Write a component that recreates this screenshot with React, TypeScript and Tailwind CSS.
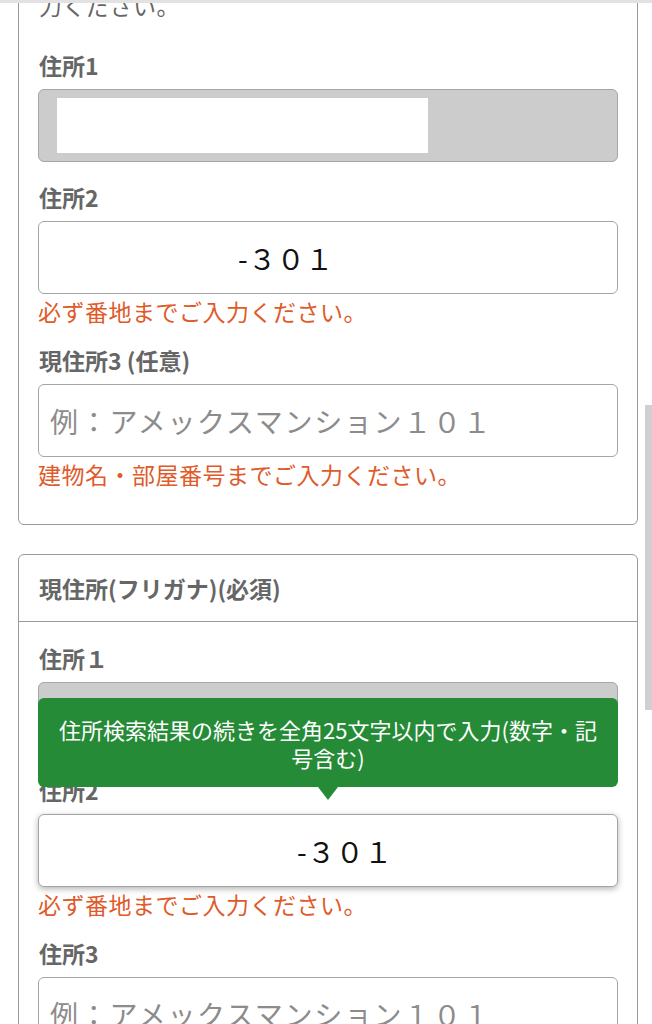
import React from 'react';

const font = { fontFamily: '"Noto Sans CJK JP", "Noto Sans", sans-serif' };

function Label({ children, className = '' }: { children: React.ReactNode; className?: string }) {
  return <div className={`text-[23px] leading-[32px] font-bold text-[#666] ${className}`}>{children}</div>;
}

function ErrorText({ children }: { children: React.ReactNode }) {
  return <div className="mt-[1px] text-[23px] leading-[32px] tracking-[0.5px] text-[#e05a2a]">{children}</div>;
}

function Tooltip() {
  return (
    <div className="absolute left-0 right-0 bottom-[calc(100%+27px)] z-10 h-[89px] rounded-md bg-[#268b37] px-[14px] flex flex-col items-center justify-center text-center text-[22px] leading-[28px] text-white">
      <span className="whitespace-nowrap">住所検索結果の続きを全角25文字以内で入力(数字・記</span>
      <span>号含む)</span>
      <div className="absolute top-full left-1/2 -translate-x-1/2 h-0 w-0 border-x-[10px] border-t-[13px] border-x-transparent border-t-[#268b37]" />
    </div>
  );
}

export default function App() {
  return (
    <div className="relative h-[1024px] w-[652px] overflow-hidden bg-white" style={font}>
      {/* browser chrome shadow */}
      <div className="absolute top-0 left-0 right-0 h-[3px] bg-[#e2e2e2] z-20" />
      {/* scrollbar */}
      <div className="absolute right-0 top-[405px] h-[305px] w-[7px] bg-[#d0d0d0] z-20" />

      <div className="ml-[18px] mr-[14px]">
        {/* 現住所 */}
        <div className="-mt-[60px] rounded-md border border-[#9a9a9a] px-[19px] pt-[48px] pb-[34px]">
          <div className="pl-[1px] text-[23px] leading-[32px] tracking-[0.5px] text-[#666]">力ください。</div>

          <Label className="mt-[28px] pl-[1px]">住所1</Label>
          <div className="mt-2 flex h-[73px] items-center rounded-md border border-[#a5a5a5] bg-[#cccccc] pl-[18px]">
            <div className="h-[55px] w-[371px] bg-white" />
          </div>

          <Label className="mt-[19px] pl-[1px]">住所2</Label>
          <input
            readOnly
            value="-３０１"
            className="mt-2 block h-[73px] w-full rounded-md border border-[#a5a5a5] bg-white pl-[199px] text-[28px] tracking-[0.5px] text-[#111] outline-none"
          />
          <ErrorText>必ず番地までご入力ください。</ErrorText>

          <Label className="mt-[17px] pl-[1px]">現住所3 (任意)</Label>
          <input
            readOnly
            placeholder="例：アメックスマンション１０１"
            className="mt-2 block h-[73px] w-full rounded-md border border-[#a5a5a5] bg-white pl-[11px] text-[28px] tracking-[1.7px] text-[#111] placeholder:text-[#8c8c8c] outline-none"
          />
          <ErrorText>建物名・部屋番号までご入力ください。</ErrorText>
        </div>

        {/* 現住所(フリガナ) */}
        <div className="mt-[29px] rounded-md border border-[#9a9a9a]">
          <div className="flex h-[67px] items-center border-b border-[#9a9a9a] px-[20px] text-[23px] font-bold text-[#666]">
            現住所(フリガナ)(必須)
          </div>
          <div className="px-[19px] pt-[20px] pb-[40px]">
            <Label className="pl-[1px]">住所１</Label>
            <div className="mt-2 h-[73px] rounded-md border border-[#a5a5a5] bg-[#cccccc]" />

            <Label className="mt-[19px] pl-[1px]">住所2</Label>
            <div className="relative mt-2">
              <Tooltip />
              <input
                readOnly
                value="-３０１"
                className="block h-[73px] w-full rounded-md border border-[#a5a5a5] bg-white pl-[258px] text-[28px] tracking-[0.5px] text-[#111] shadow-[0_2px_6px_rgba(0,0,0,0.3)] outline-none"
              />
            </div>
            <ErrorText>必ず番地までご入力ください。</ErrorText>

            <Label className="mt-[17px] pl-[1px]">住所3</Label>
            <input
              readOnly
              placeholder="例：アメックスマンション１０１"
              className="mt-2 block h-[73px] w-full rounded-md border border-[#a5a5a5] bg-white pl-[11px] text-[28px] tracking-[1.7px] text-[#111] placeholder:text-[#8c8c8c] outline-none"
            />
          </div>
        </div>
      </div>
    </div>
  );
}
